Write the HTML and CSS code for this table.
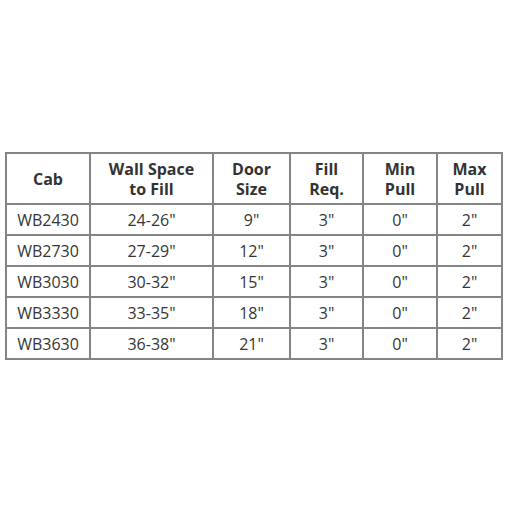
FILE: index.html
```html
<!DOCTYPE html>
<html>
<head>
<meta charset="utf-8">
<link rel="stylesheet" href="styles.css">
</head>
<body>
<div class="wrap">
<table class="spec">
<colgroup>
<col class="c1"><col class="c2"><col class="c3"><col class="c4"><col class="c5"><col class="c6">
</colgroup>
<thead>
<tr class="head">
<th>Cab</th><th>Wall Space<br>to Fill</th><th>Door<br>Size</th><th>Fill<br>Req.</th><th>Min<br>Pull</th><th>Max<br>Pull</th>
</tr>
</thead>
<tbody>
<tr><td>WB2430</td><td>24-26"</td><td>9"</td><td>3"</td><td>0"</td><td>2"</td></tr>
<tr><td>WB2730</td><td>27-29"</td><td>12"</td><td>3"</td><td>0"</td><td>2"</td></tr>
<tr><td>WB3030</td><td>30-32"</td><td>15"</td><td>3"</td><td>0"</td><td>2"</td></tr>
<tr><td>WB3330</td><td>33-35"</td><td>18"</td><td>3"</td><td>0"</td><td>2"</td></tr>
<tr><td>WB3630</td><td>36-38"</td><td>21"</td><td>3"</td><td>0"</td><td>2"</td></tr>
</tbody>
</table>
</div>
</body>
</html>
```
FILE: styles.css
```css
html, body {
  margin: 0;
  padding: 0;
  background: #ffffff;
}
.wrap {
  padding: 152px 0 0 5px;
}
.spec {
  border-collapse: separate;
  border-spacing: 0;
  table-layout: fixed;
  width: 498px;
  border-top: 2px solid #858585;
  border-left: 2px solid #858585;
  font-family: "Open Sans", sans-serif;
  font-size: 16px;
  color: #363636;
}
.c1 { width: 84px; }
.c2 { width: 123px; }
.c3 { width: 77px; }
.c4 { width: 73px; }
.c5 { width: 74px; }
.c6 { width: 65px; }
.spec th, .spec td {
  box-sizing: border-box;
  border-right: 2px solid #858585;
  border-bottom: 2px solid #858585;
  padding: 0;
  text-align: center;
  vertical-align: middle;
}
.spec th {
  font-weight: 700;
  line-height: 20px;
  height: 51px;
  color: #333333;
}
.spec td {
  font-weight: 400;
  height: 31px;
  line-height: 20px;
}
```
